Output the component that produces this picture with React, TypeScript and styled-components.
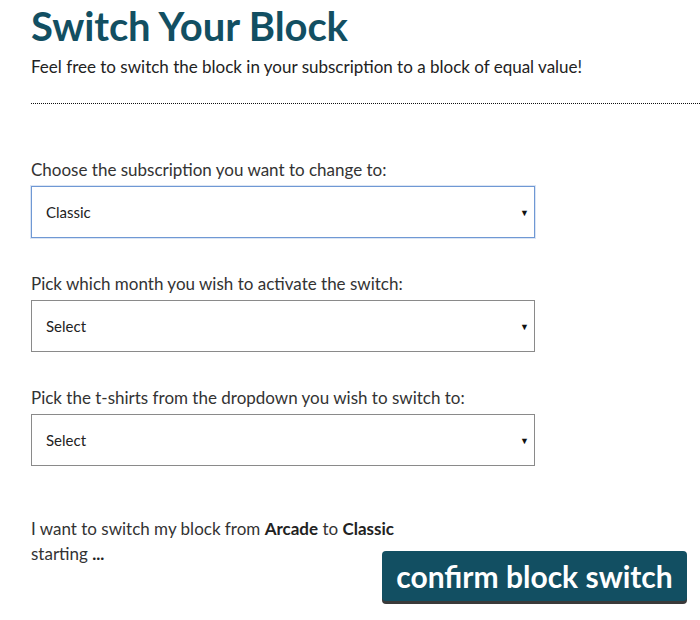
import React from 'react'
import styled, { createGlobalStyle } from 'styled-components'

const GlobalStyle = createGlobalStyle`
  html, body {
    margin: 0;
    padding: 0;
    background: #ffffff;
  }
  body {
    font-family: Lato, "Open Sans", sans-serif;
    color: #222;
  }
`

const Page = styled.main`
  width: 700px;
  height: 620px;
  padding-left: 31px;
  box-sizing: border-box;
  overflow: hidden;
`

const Title = styled.h1`
  margin: 0;
  padding-top: 4px;
  font-size: 40px;
  line-height: 44px;
  font-weight: 700;
  color: #124f62;
  letter-spacing: -0.1px;
`

const Lead = styled.p`
  margin: 8px 0 0;
  font-size: 17px;
  line-height: 22px;
  color: #222;
`

const Divider = styled.hr`
  margin: 25px 0 0;
  border: none;
  border-top: 1px dotted #111;
  height: 0;
`

const Form = styled.form`
  display: flex;
  flex-direction: column;
  gap: 35px;
  padding-top: 55px;
`

const Field = styled.div`
  display: flex;
  flex-direction: column;
  gap: 5px;
`

const Label = styled.label`
  font-size: 17px;
  line-height: 22px;
  color: #333;
`

const SelectWrap = styled.div`
  position: relative;
  width: 504px;

  &::after {
    content: '▼';
    position: absolute;
    right: 6px;
    top: 50%;
    transform: translateY(-50%);
    font-size: 9px;
    color: #111;
    pointer-events: none;
  }
`

const Select = styled.select<{ $focused?: boolean }>`
  appearance: none;
  width: 100%;
  height: 52px;
  box-sizing: border-box;
  padding: 0 14px;
  font-family: Lato, "Open Sans", sans-serif;
  font-size: 15px;
  color: #222;
  background: #fff;
  border: 1px solid ${p => (p.$focused ? '#6f98d4' : '#8a8a8a')};
  box-shadow: ${p => (p.$focused ? '0 0 0 1px rgba(111,152,212,0.25)' : 'none')};
  border-radius: 0;
  outline: none;
`

const Summary = styled.div`
  margin-top: 50px;
  font-size: 17px;
  line-height: 25px;
  color: #333;

  b {
    font-weight: 700;
    color: #222;
  }
`

const SummaryRow = styled.div`
  display: flex;
  justify-content: space-between;
  align-items: flex-start;
  padding-right: 13px;
`

const ConfirmButton = styled.button`
  margin-top: 10px;
  width: 305px;
  height: 50px;
  padding: 0;
  border: none;
  border-radius: 4px;
  background: #124f62;
  box-shadow: 0 3px 0 #3a3a3a;
  color: #fff;
  font-family: Lato, "Open Sans", sans-serif;
  font-weight: 700;
  font-size: 30px;
  cursor: pointer;
`

const SelectField = ({ label, value, focused }: { label: string; value: string; focused?: boolean }) => (
  <Field>
    <Label>{label}</Label>
    <SelectWrap>
      <Select $focused={focused} defaultValue={value}>
        <option>{value}</option>
      </Select>
    </SelectWrap>
  </Field>
)

const App = () => {
  return (
    <>
      <GlobalStyle />
      <Page>
        <Title>Switch Your Block</Title>
        <Lead>Feel free to switch the block in your subscription to a block of equal value!</Lead>
        <Divider />
        <Form>
          <SelectField label='Choose the subscription you want to change to:' value='Classic' focused />
          <SelectField label='Pick which month you wish to activate the switch:' value='Select' />
          <SelectField label='Pick the t-shirts from the dropdown you wish to switch to:' value='Select' />
        </Form>
        <Summary>
          <div>I want to switch my block from <b>Arcade</b> to <b>Classic</b></div>
          <SummaryRow>
            <span>starting <b>...</b></span>
            <ConfirmButton type='button'>confirm block switch</ConfirmButton>
          </SummaryRow>
        </Summary>
      </Page>
    </>
  )
}

export default App
